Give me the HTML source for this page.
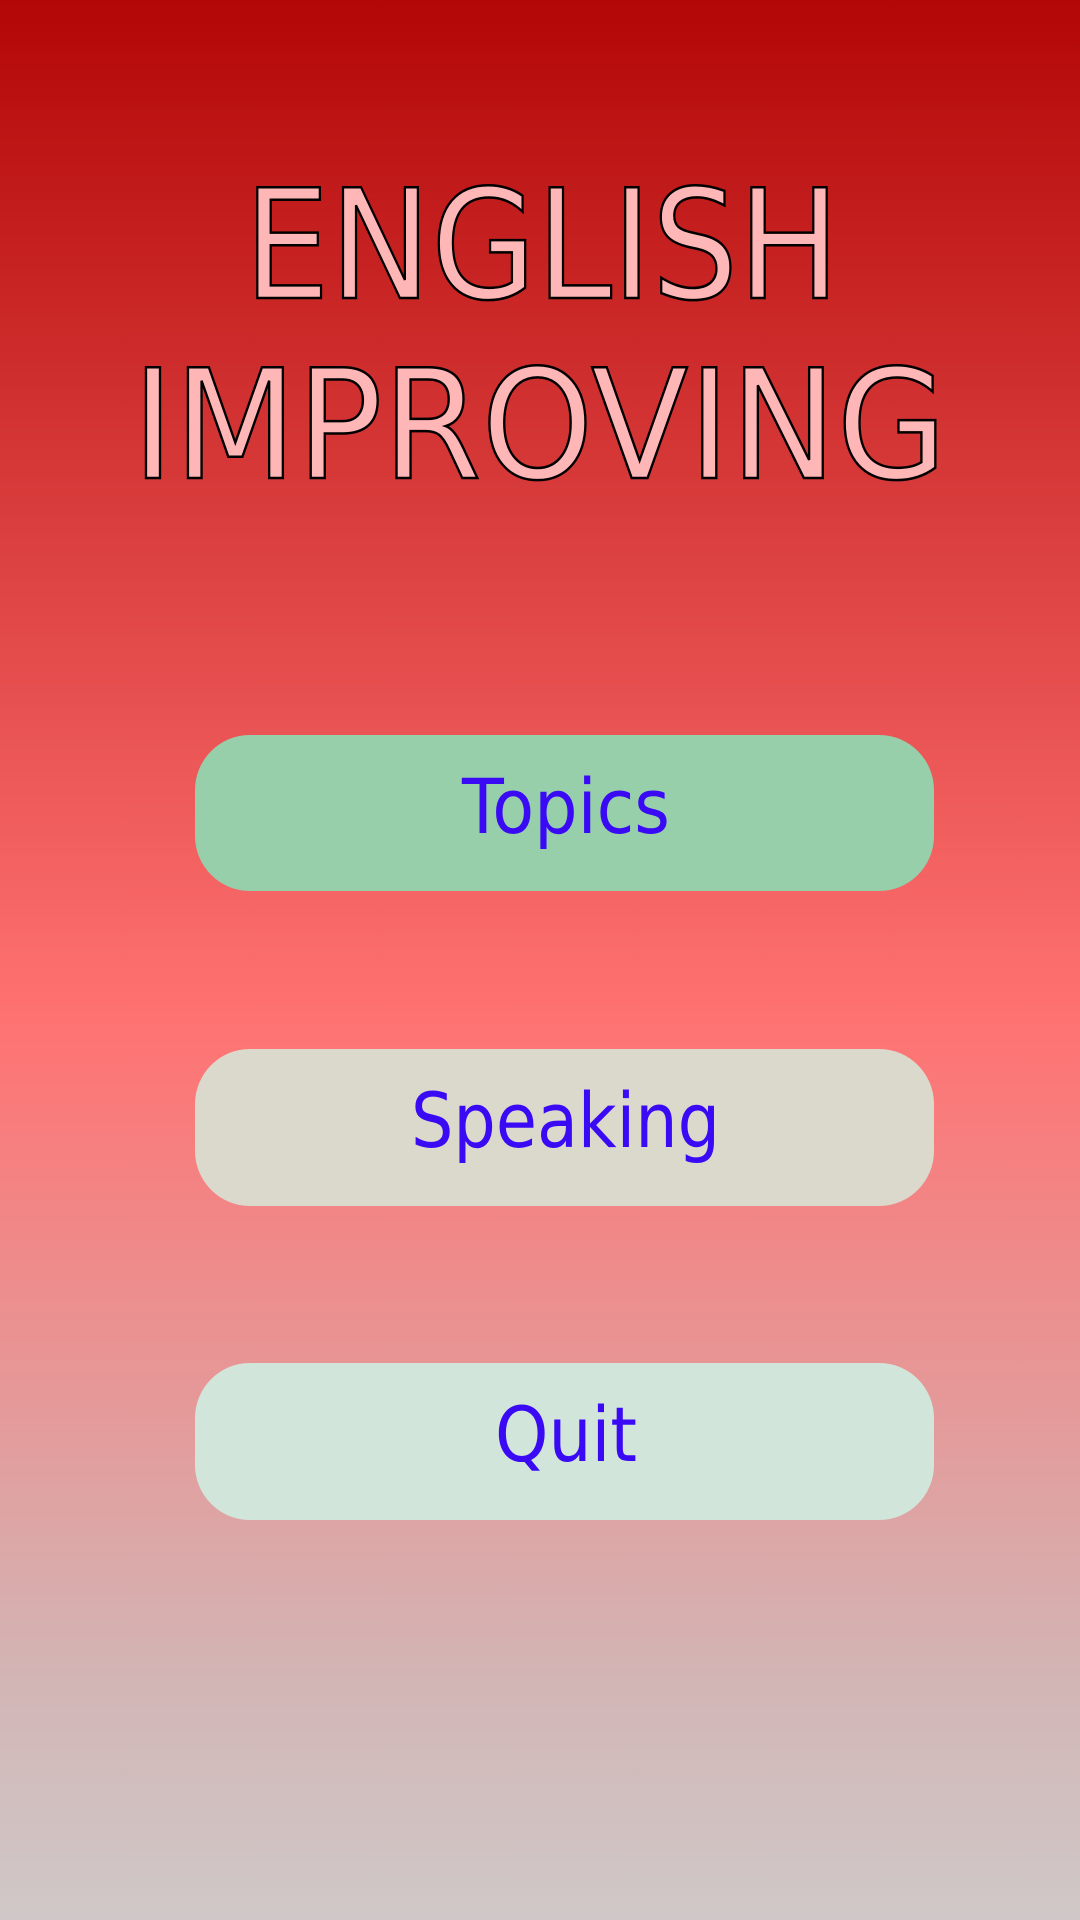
<!DOCTYPE html>
<html><head><meta charset="utf-8">
<style>
html,body{margin:0;padding:0;width:1080px;height:1920px;overflow:hidden;}
svg{display:block}
</style></head>
<body>
<svg width="1080" height="1920" viewBox="0 0 1080 1920" xmlns="http://www.w3.org/2000/svg">
<defs>
<linearGradient id="bg" x1="0" y1="0" x2="0" y2="1">
<stop offset="0" stop-color="#b30606"/>
<stop offset="0.53" stop-color="#ff7272"/>
<stop offset="0.88" stop-color="#d2b6b6"/>
<stop offset="1" stop-color="#d0c8c8"/>
</linearGradient>
</defs>
<rect width="1080" height="1920" fill="url(#bg)"/>
<g font-family="'DejaVu Sans', sans-serif" fill="#ffb6b6" stroke="#000" stroke-width="2.5">
<text x="244" y="298" font-size="152" textLength="596" lengthAdjust="spacingAndGlyphs">ENGLISH</text>
<text x="132" y="478" font-size="152" textLength="815" lengthAdjust="spacingAndGlyphs">IMPROVING</text>
</g>
<rect x="195" y="735" width="739" height="156" rx="55" fill="#96cfaa"/>
<rect x="195" y="1049" width="739" height="157" rx="55" fill="#dbd9cc"/>
<rect x="195" y="1363" width="739" height="157" rx="55" fill="#d2e5da"/>
<g font-family="'DejaVu Sans', sans-serif" fill="#3a0af5" font-size="76">
<text x="462" y="833" textLength="208" lengthAdjust="spacingAndGlyphs">Topics</text>
<text x="411" y="1147" textLength="309" lengthAdjust="spacingAndGlyphs">Speaking</text>
<text x="495" y="1461" textLength="142" lengthAdjust="spacingAndGlyphs">Quit</text>
</g>
</svg>
</body></html>
